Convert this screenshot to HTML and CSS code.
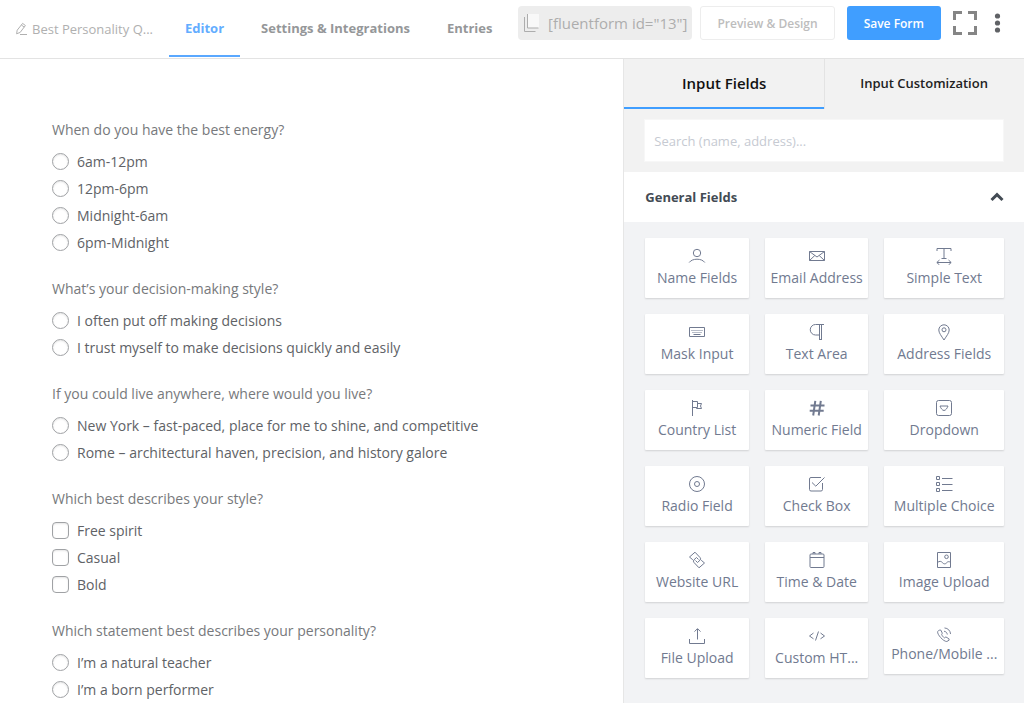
FILE: index.html
```html
<!DOCTYPE html>
<html lang="en">
<head>
    <meta charset="UTF-8">
    <meta name="viewport" content="width=device-width, initial-scale=1.0">
    <title>Form Editor</title>
    <link rel="stylesheet" href="styles.css">
</head>
<body>
    <header class="topbar">
        <button class="form-name" type="button">
            <svg width="13" height="14" viewBox="0 0 13 14"><path d="M2.2 8.2 7.6 1.4 10.4 3.5 5.2 10.4 1.6 11.8zM6.4 3l2.8 2.1M5 12.500h7"/></svg>
            <span>Best Personality Q...</span>
        </button>
        <nav class="menu">
            <a class="active" href="#editor">Editor</a>
            <a href="#settings">Settings &amp; Integrations</a>
            <a href="#entries">Entries</a>
        </nav>
        <div class="actions">
            <button class="shortcode" type="button">
                <svg width="17" height="20" viewBox="0 0 17 20"><path class="sheet" d="M4 1h12v14H4z"/><path d="M4.500 1v14h11M1.500 4v14.500h11"/></svg>
                <span>[fluentform id="13"]</span>
            </button>
            <button class="preview" type="button">Preview &amp; Design</button>
            <button class="save" type="button">Save Form</button>
            <button class="icon-btn fullscreen" type="button" aria-label="Fullscreen">
                <svg width="24" height="24" viewBox="0 0 24 24"><path d="M1.500 9V1.500H9M15 1.500h7.500V9M22.500 15v7.500H15M9 22.500H1.500V15"/></svg>
            </button>
            <button class="icon-btn more" type="button" aria-label="More">
                <svg width="7" height="20" viewBox="0 0 7 20"><circle cx="3.500" cy="3" r="2.600"/><circle cx="3.500" cy="10" r="2.600"/><circle cx="3.500" cy="17" r="2.600"/></svg>
            </button>
        </div>
    </header>

    <div class="editor">
        <main class="form-preview">
            <fieldset class="question">
                <legend>When do you have the best energy?</legend>
                <label><input type="radio" name="energy"> 6am-12pm</label>
                <label><input type="radio" name="energy"> 12pm-6pm</label>
                <label><input type="radio" name="energy"> Midnight-6am</label>
                <label><input type="radio" name="energy"> 6pm-Midnight</label>
            </fieldset>
            <fieldset class="question">
                <legend>What’s your decision-making style?</legend>
                <label><input type="radio" name="decision"> I often put off making decisions</label>
                <label><input type="radio" name="decision"> I trust myself to make decisions quickly and easily</label>
            </fieldset>
            <fieldset class="question">
                <legend>If you could live anywhere, where would you live?</legend>
                <label><input type="radio" name="live"> New York – fast-paced, place for me to shine, and competitive</label>
                <label><input type="radio" name="live"> Rome – architectural haven, precision, and history galore</label>
            </fieldset>
            <fieldset class="question">
                <legend>Which best describes your style?</legend>
                <label><input type="checkbox" name="style"> Free spirit</label>
                <label><input type="checkbox" name="style"> Casual</label>
                <label><input type="checkbox" name="style"> Bold</label>
            </fieldset>
            <fieldset class="question">
                <legend>Which statement best describes your personality?</legend>
                <label><input type="radio" name="personality"> I’m a natural teacher</label>
                <label><input type="radio" name="personality"> I’m a born performer</label>
            </fieldset>
        </main>

        <aside class="sidebar">
            <div class="tabs">
                <button class="tab active" type="button">Input Fields</button>
                <button class="tab" type="button">Input Customization</button>
            </div>
            <div class="search">
                <input type="text" placeholder="Search (name, address)..." aria-label="Search fields">
            </div>
            <button class="section-title" type="button">
                <span>General Fields</span>
                <svg width="14" height="10" viewBox="0 0 14 10"><path d="M1.500 8 7 2.700 12.500 8"/></svg>
            </button>
            <div class="fields">
                <button class="field" type="button">
                    <svg viewBox="0 0 18 18"><circle cx="9" cy="6" r="3.700"/><path d="M1.200 15.500c1.600-2.200 4.500-3.300 7.800-3.300s6.200 1.100 7.800 3.300"/></svg>
                    <span>Name Fields</span>
                </button>
                <button class="field" type="button">
                    <svg viewBox="0 0 18 18"><path d="M1.500 4.500h15v9h-15zM1.500 4.500 9 10l7.500-5.500M1.500 13.500 6.800 8.500M16.500 13.500l-5.300-5"/></svg>
                    <span>Email Address</span>
                </button>
                <button class="field" type="button">
                    <svg viewBox="0 0 18 18"><path d="M2 4V1.500h14V4M9 1.500v10M6.500 11.500h5M2 15.500h14M4.500 13l-2.700 2.500L4.500 18M13.500 13l2.700 2.500-2.700 2.500"/></svg>
                    <span>Simple Text</span>
                </button>
                <button class="field" type="button">
                    <svg viewBox="0 0 18 18"><path d="M1.500 4.500h15v9h-15z"/><path class="dots" d="M3.500 7.500h11M4.500 9.500h9"/><path d="M5.500 11.500h7"/></svg>
                    <span>Mask Input</span>
                </button>
                <button class="field" type="button">
                    <svg viewBox="0 0 18 18"><path d="M16 1.500H7.500a5 5 0 0 0 0 10.500H11.500M11.500 1.500v15.500M13.500 1.500v15.500M11 16.500h3"/></svg>
                    <span>Text Area</span>
                </button>
                <button class="field" type="button">
                    <svg viewBox="0 0 18 18"><path d="M9 17C6.500 13 3.800 10 3.800 7a5.200 5.200 0 0 1 10.400 0c0 3-2.700 6-5.200 10z"/><circle cx="9" cy="6.800" r="2"/></svg>
                    <span>Address Fields</span>
                </button>
                <button class="field" type="button">
                    <svg viewBox="0 0 18 18"><path d="M4.500 1v16M4.500 2.500h5v6h-5M9.500 4.500h4l-1 2.500 1 2.500h-5v-1"/></svg>
                    <span>Country List</span>
                </button>
                <button class="field" type="button">
                    <svg class="bold" viewBox="0 0 18 18"><path d="M7.300 1.800 5.200 16.500M12.800 1.800l-2.100 14.700M2.500 6.500h14M1.700 11.800h14"/></svg>
                    <span>Numeric Field</span>
                </button>
                <button class="field" type="button">
                    <svg viewBox="0 0 18 18"><rect x="1.500" y="1.500" width="15" height="15" rx="2"/><path d="M5 7h8c-.5 1.800-2.300 4.500-4 4.500S5.500 8.800 5 7z"/></svg>
                    <span>Dropdown</span>
                </button>
                <button class="field" type="button">
                    <svg viewBox="0 0 18 18"><circle cx="9" cy="9" r="7.500"/><circle cx="9" cy="9" r="2.500"/></svg>
                    <span>Radio Field</span>
                </button>
                <button class="field" type="button">
                    <svg viewBox="0 0 18 18"><path d="M13 2.500H3A1.500 1.500 0 0 0 1.500 4v10.500A1.500 1.500 0 0 0 3 16h10a1.500 1.500 0 0 0 1.500-1.500V8M4 7.500l3.800 3.700L16.500 2.500"/></svg>
                    <span>Check Box</span>
                </button>
                <button class="field" type="button">
                    <svg viewBox="0 0 18 18"><path d="M1.500 1.500h3v3h-3zM1.500 7.500h3v3h-3zM1.500 13.500h3v3h-3zM7 3.500h10.500M7 9.500h10.500M7 15.500h10.500"/></svg>
                    <span>Multiple Choice</span>
                </button>
                <button class="field" type="button">
                    <svg viewBox="0 0 18 18"><path d="M4.800 8.800 1.500 6 7 1.200l5 5.300a2 2 0 0 1 0 2.700L9.500 11.500 7.500 9.500M13.200 9.200l3.300 2.800L11 16.800l-5-5.300a2 2 0 0 1 0-2.700L8.500 6.500l2 2"/></svg>
                    <span>Website URL</span>
                </button>
                <button class="field" type="button">
                    <svg viewBox="0 0 18 18"><rect x="2" y="3" width="14" height="13.500" rx="1"/><path d="M2 6.500h14M5 3V1.500h2V3M11 3V1.500h2V3"/></svg>
                    <span>Time &amp; Date</span>
                </button>
                <button class="field" type="button">
                    <svg viewBox="0 0 18 18"><path d="M2.500 1.500h13v15h-13zM2.500 11.500c2-1.800 3.800-1.300 5 .2s3 1.500 4 .2 2.500-1.700 4-.6"/><circle cx="11.500" cy="5.800" r="1.800"/></svg>
                    <span>Image Upload</span>
                </button>
                <button class="field" type="button">
                    <svg viewBox="0 0 18 18"><path d="M1.500 12v4.500h15V12M9.500 12.500V2M6.500 4.600l3-3 3 3"/></svg>
                    <span>File Upload</span>
                </button>
                <button class="field" type="button">
                    <svg viewBox="0 0 18 18"><path d="M5.500 6 1.500 9l4 2.800M12.500 6l4 3-4 2.800M10.500 4.500l-3 9"/></svg>
                    <span>Custom HT...</span>
                </button>
                <button class="field compact" type="button">
                    <svg viewBox="1 1 16 16"><path d="M4 4.200 2.200 6c-.6 2.800 6 10.500 9.800 10.500l2.500-1.500-.3-1.500-3.200-1.900-1.500 1c-1.300-.7-2.600-2.400-3-3.800L7.200 7.600 5.600 4.300zM9 5.500c2 .2 3.300 1.600 3.500 3.500M9.500 2c3.700.2 6.300 3 6.500 6.500"/></svg>
                    <span>Phone/Mobile ...</span>
                </button>
            </div>
        </aside>
    </div>
</body>
</html>
```
FILE: styles.css
```css
* {
    box-sizing: border-box;
}
body {
    margin: 0;
    min-height: 100vh;
    display: flex;
    flex-direction: column;
    font-family: "Open Sans", "Noto Sans", sans-serif;
    font-size: 14px;
    color: #606266;
    background: #fff;
}
button {
    font: inherit;
    color: inherit;
    background: none;
    border: none;
    padding: 0;
    cursor: pointer;
}
svg {
    fill: none;
    stroke: currentColor;
}

/* top bar */
.topbar {
    display: flex;
    height: 59px;
    padding: 0 23px 0 15px;
    border-bottom: 1px solid #e3e3e3;
    white-space: nowrap;
}
.form-name {
    display: flex;
    align-items: center;
    gap: 4px;
    margin-right: 16px;
    font-size: 13px;
    color: #b0b0b0;
}
.menu {
    display: flex;
    gap: 5px;
}
.menu a {
    height: 57px;
    padding: 0 16px;
    line-height: 56px;
    font-size: 13px;
    font-weight: 700;
    color: #959799;
    text-decoration: none;
    border-bottom: 2px solid transparent;
}
.menu a.active {
    color: #63adff;
    border-color: #5aa8ff;
}
.actions {
    display: flex;
    align-items: center;
    height: 46px;
    margin-left: auto;
}
.shortcode {
    display: flex;
    align-items: center;
    gap: 8px;
    height: 34px;
    padding: 0 5px;
    font-size: 15px;
    font-weight: 500;
    color: #adadad;
    background: #ededed;
    border-radius: 4px;
}
.shortcode .sheet {
    fill: #f8f8f8;
    stroke: none;
}
.preview,
.save {
    height: 34px;
    padding: 0 16px;
    font-size: 12px;
    font-weight: 600;
    border-radius: 3px;
}
.preview {
    margin-left: 8px;
    color: #bdbdbd;
    border: 1px solid #ededed;
}
.save {
    margin-left: 12px;
    padding: 0 17px;
    color: #fff;
    background: #409eff;
}
.icon-btn {
    display: flex;
}
.fullscreen {
    margin-left: 12px;
    color: #858585;
    stroke-width: 3;
}
.more {
    margin-left: 17px;
}
.more svg {
    fill: #606266;
    stroke: none;
}

/* layout */
.editor {
    flex: 1;
    display: grid;
    grid-template-columns: 14fr 9fr;
}

/* form preview */
.form-preview {
    padding: 59px 52px 0;
}
.question {
    margin: 0 0 21px;
    padding: 0;
    border: none;
}
.question:last-child {
    margin-bottom: 0;
}
.question legend {
    margin-bottom: 6px;
    padding: 0;
    line-height: 24px;
    color: #77797c;
}
.question label {
    display: flex;
    align-items: center;
    gap: 8px;
    line-height: 27px;
}
.question input {
    appearance: none;
    width: 17px;
    height: 17px;
    margin: 0;
    background: #fff;
    border: 1px solid #a0a2a5;
    border-radius: 4px;
    box-shadow: inset 0 1px 2px rgba(0,0,0,0.1);
}
.question input[type="radio"] {
    border-radius: 50%;
}
.question input:checked {
    background: #409eff;
}

/* sidebar */
.sidebar {
    min-width: 0;
    background: #f2f3f5;
    border-left: 1px solid #e6e6e6;
}
.tabs {
    display: grid;
    grid-template-columns: 1fr 1fr;
    background: #f2f2f2;
}
.tab {
    height: 50px;
    font-size: 13px;
    font-weight: 600;
    color: #222;
    border-bottom: 2px solid transparent;
}
.tab.active {
    font-size: 15px;
    color: #111;
    border-bottom-color: #409eff;
    box-shadow: 1px 0 #e3e3e3;
}
.search {
    padding: 10px 20px;
    background: #f2f2f2;
}
.search input {
    display: block;
    width: 100%;
    height: 43px;
    padding: 0 9px;
    font: inherit;
    font-size: 13px;
    color: #606266;
    background: #fff;
    border: 1px solid #f7f7f7;
}
.search input::placeholder {
    color: #c6cad2;
}
.section-title {
    display: flex;
    align-items: center;
    justify-content: space-between;
    width: 100%;
    height: 50px;
    padding: 0 20px 0 21px;
    font-size: 13px;
    font-weight: 700;
    color: #434b54;
    background: #fff;
}
.section-title svg {
    stroke-width: 3;
}
.fields {
    display: grid;
    grid-template-columns: minmax(0, 13fr) minmax(0, 13fr) minmax(0, 15fr);
    gap: 16px;
    align-items: start;
    padding: 16px 20px 24px 21px;
}
.field {
    display: flex;
    flex-direction: column;
    align-items: center;
    padding: 9px 0 8px;
    color: #717a90;
    background: #fff;
    border-radius: 1px;
    box-shadow: 0 1px 2px rgba(0,0,0,0.14);
}
.field svg {
    width: 18px;
    height: 18px;
    margin-bottom: 1px;
}
.field svg.bold {
    stroke-width: 2;
}
.field .dots {
    stroke-dasharray: 1 1;
}
.field span {
    line-height: 24px;
    white-space: nowrap;
}
.field.compact svg {
    height: 15px;
    margin-bottom: 0;
}
```
